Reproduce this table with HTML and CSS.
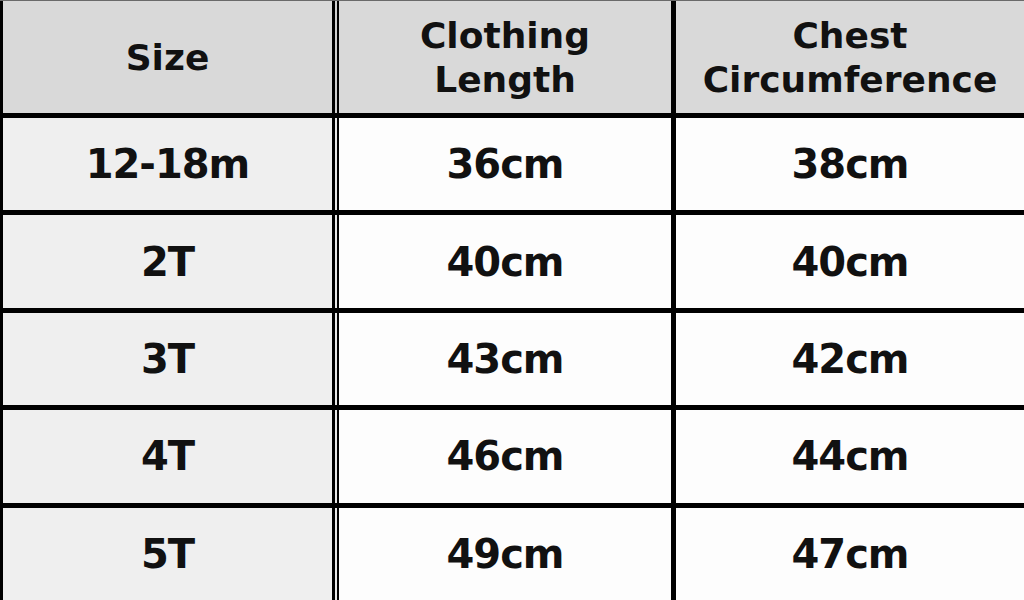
FILE: index.html
```html
<!DOCTYPE html>
<html lang="en">
<head>
<meta charset="utf-8">
<title>Size Chart</title>
<link rel="stylesheet" href="styles.css">
</head>
<body>
<div class="chart" role="table">
  <div class="cell head first" role="columnheader">Size</div>
  <div class="cell head mid" role="columnheader">Clothing<br>Length</div>
  <div class="cell head" role="columnheader">Chest<br>Circumference</div>

  <div class="cell size first">12-18m</div>
  <div class="cell mid">36cm</div>
  <div class="cell">38cm</div>

  <div class="cell size first">2T</div>
  <div class="cell mid">40cm</div>
  <div class="cell">40cm</div>

  <div class="cell size first">3T</div>
  <div class="cell mid">43cm</div>
  <div class="cell">42cm</div>

  <div class="cell size first">4T</div>
  <div class="cell mid">46cm</div>
  <div class="cell">44cm</div>

  <div class="cell size first">5T</div>
  <div class="cell mid">49cm</div>
  <div class="cell">47cm</div>
</div>
</body>
</html>
```

FILE: styles.css
```css
html, body {
  margin: 0;
  padding: 0;
}

body {
  width: 1024px;
  height: 600px;
  overflow: hidden;
  font-family: "DejaVu Sans", "Liberation Sans", sans-serif;
  color: #111;
}

.chart {
  box-sizing: border-box;
  width: 1024px;
  height: 600px;
  background: #000;
  border-top: 1px solid #6a6a6a;
  padding-left: 3px;
  display: grid;
  grid-template-columns: 329px 334px 1fr;
  grid-template-rows: 112px repeat(5, 1fr);
  column-gap: 5px;
  row-gap: 5px;
}

.cell {
  display: flex;
  align-items: center;
  justify-content: center;
  text-align: center;
  background: #fdfdfd;
  font-weight: 700;
  font-size: 40px;
  letter-spacing: -1px;
}

.first {
  box-shadow: 3px 0 0 #000, 5px 0 0 #e8e8e8;
}

.mid {
  border-left: 2px solid #000;
}

.head {
  background: #d9d9d9;
  font-size: 36px;
  line-height: 44px;
  letter-spacing: 0;
  padding-top: 2px;
}

.head.first {
  box-shadow: 3px 0 0 #000, 5px 0 0 #cfcfcf;
}

.size {
  background: #efefef;
}
```
